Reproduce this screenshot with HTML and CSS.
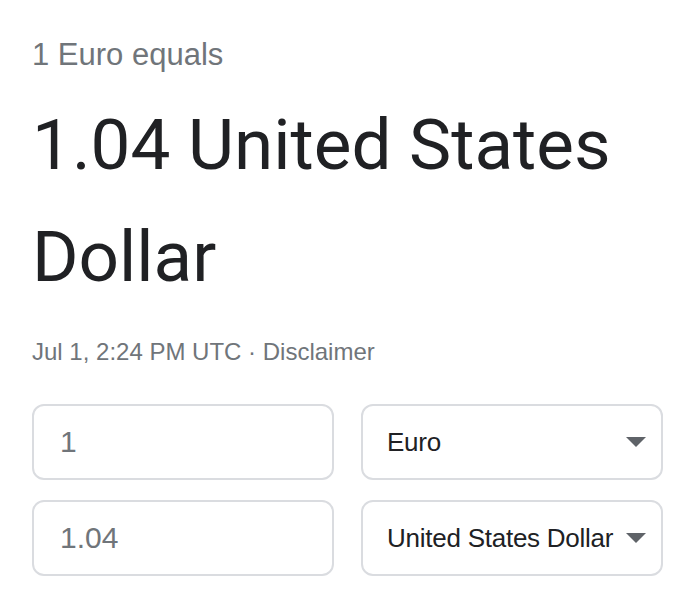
FILE: index.html
```html
<!DOCTYPE html>
<html lang="en">
<head>
<meta charset="utf-8">
<title>Currency converter</title>
<link rel="stylesheet" href="styles.css">
</head>
<body>
<div class="card">
  <div class="subtitle">1 Euro equals</div>
  <div class="result">1.04 United States Dollar</div>
  <div class="meta">Jul 1, 2:24 PM UTC · <span class="link">Disclaimer</span></div>
  <div class="grid">
    <div class="box field"><span class="value">1</span></div>
    <div class="box select"><span class="label">Euro</span><span class="arrow"></span></div>
    <div class="box field"><span class="value">1.04</span></div>
    <div class="box select"><span class="label">United States Dollar</span><span class="arrow"></span></div>
  </div>
</div>
</body>
</html>
```
FILE: styles.css
```css
html, body {
  margin: 0;
  padding: 0;
  background: #ffffff;
}

.card {
  padding: 35px 0 0 32px;
  font-family: "Liberation Sans", Arial, sans-serif;
}

.subtitle {
  font-size: 31px;
  line-height: 40px;
  color: #70757a;
}

.result {
  margin-top: 14px;
  width: 620px;
  font-family: Roboto, "Noto Sans", sans-serif;
  font-size: 71px;
  line-height: 112px;
  color: #202124;
}

.meta {
  margin-top: 23px;
  font-size: 24px;
  line-height: 32px;
  color: #70757a;
}

.grid {
  margin-top: 36px;
  display: grid;
  grid-template-columns: 302px 302px;
  column-gap: 27px;
  row-gap: 20px;
}

.box {
  box-sizing: border-box;
  height: 76px;
  border: 2px solid #dadce0;
  border-radius: 12px;
  display: flex;
  align-items: center;
}

.field {
  padding: 0 24px 0 26px;
}

.value {
  font-size: 30px;
  color: #70757a;
}

.select {
  padding: 0 15px 0 24px;
}

.label {
  flex: 1;
  font-size: 26px;
  letter-spacing: -0.25px;
  color: #202124;
  white-space: nowrap;
}

.arrow {
  flex: none;
  width: 0;
  height: 0;
  border-left: 10px solid transparent;
  border-right: 10px solid transparent;
  border-top: 10px solid #5f6368;
  margin-left: 8px;
}
```
